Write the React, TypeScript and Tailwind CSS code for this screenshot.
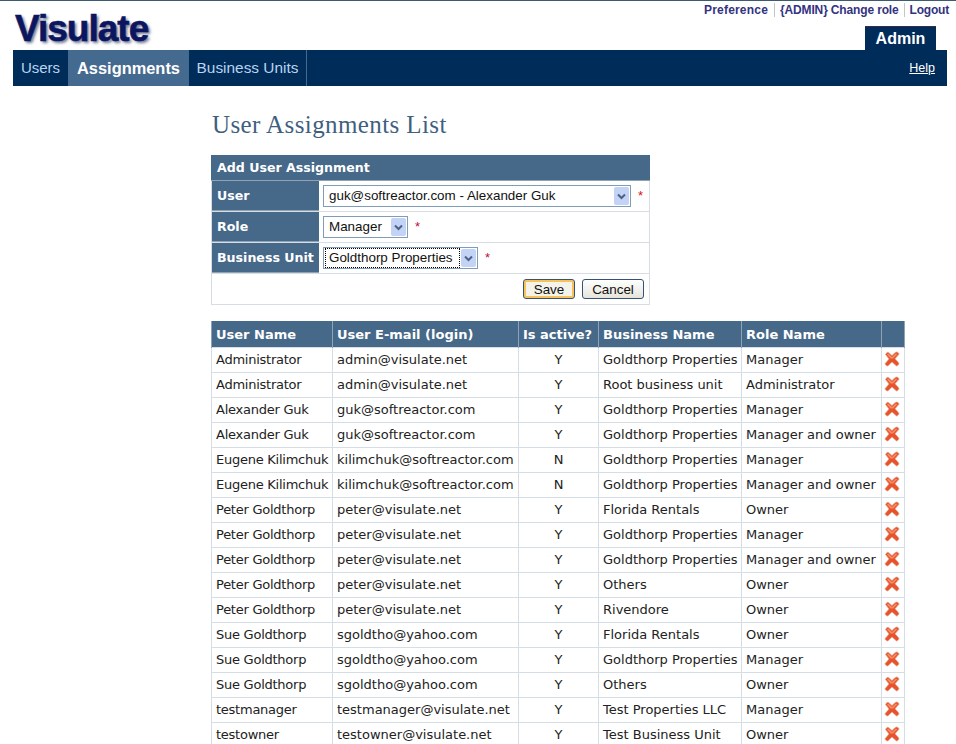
import React from 'react';

const rows = [
  ['Administrator', 'admin@visulate.net', 'Y', 'Goldthorp Properties', 'Manager'],
  ['Administrator', 'admin@visulate.net', 'Y', 'Root business unit', 'Administrator'],
  ['Alexander Guk', 'guk@softreactor.com', 'Y', 'Goldthorp Properties', 'Manager'],
  ['Alexander Guk', 'guk@softreactor.com', 'Y', 'Goldthorp Properties', 'Manager and owner'],
  ['Eugene Kilimchuk', 'kilimchuk@softreactor.com', 'N', 'Goldthorp Properties', 'Manager'],
  ['Eugene Kilimchuk', 'kilimchuk@softreactor.com', 'N', 'Goldthorp Properties', 'Manager and owner'],
  ['Peter Goldthorp', 'peter@visulate.net', 'Y', 'Florida Rentals', 'Owner'],
  ['Peter Goldthorp', 'peter@visulate.net', 'Y', 'Goldthorp Properties', 'Manager'],
  ['Peter Goldthorp', 'peter@visulate.net', 'Y', 'Goldthorp Properties', 'Manager and owner'],
  ['Peter Goldthorp', 'peter@visulate.net', 'Y', 'Others', 'Owner'],
  ['Peter Goldthorp', 'peter@visulate.net', 'Y', 'Rivendore', 'Owner'],
  ['Sue Goldthorp', 'sgoldtho@yahoo.com', 'Y', 'Florida Rentals', 'Owner'],
  ['Sue Goldthorp', 'sgoldtho@yahoo.com', 'Y', 'Goldthorp Properties', 'Manager'],
  ['Sue Goldthorp', 'sgoldtho@yahoo.com', 'Y', 'Others', 'Owner'],
  ['testmanager', 'testmanager@visulate.net', 'Y', 'Test Properties LLC', 'Manager'],
  ['testowner', 'testowner@visulate.net', 'Y', 'Test Business Unit', 'Owner'],
];

const DeleteIcon = () => (
  <svg width="16" height="16" viewBox="0 0 16 16" className="block mx-auto -translate-x-px -translate-y-px">
    <path
      d="M1.5 3.5 C2.5 1.5 3.5 1 4.5 1.5 L8 4.6 C9.5 3 11 1.2 12.5 1 C14 1.2 15 2.2 15 3.2 L11 7.8 C12.5 9.5 14.5 11 15 12.8 C14.5 14 13.5 15 12.5 15 L8 11 L3.8 15 C2.5 15 1.5 14 1 12.7 L5 8 Z"
      fill="#e8532b"
      stroke="#dca791"
      strokeWidth="0.7"
      strokeLinejoin="round"
    />
    <path d="M3 3.4 L4.2 2.4 L8 6 L11.8 2.4 L13.2 3.2 L9 7.4 L6.6 7.4 Z" fill="#f58c66" />
  </svg>
);

const Select = ({ label, width, focused }: { label: string; width: string; focused?: boolean }) => (
  <div className={`${width} h-[22px] border border-[#7f9db9] bg-white flex items-center pl-[2px] pr-[1px]`}>
    <span className={`flex-1 h-[18px] flex items-center pl-[3px] text-[13.4px] text-[#111] font-['Liberation_Sans',sans-serif] whitespace-nowrap ${focused ? 'outline-1 outline-dotted outline-black' : ''}`}>
      {label}
    </span>
    <span className="ml-[2px] w-[15px] h-[18px] bg-[#c3d3f5] rounded-[2px] flex items-center justify-center">
      <svg width="9" height="7" viewBox="0 0 9 7">
        <path d="M1 1.5 L4.5 5 L8 1.5" fill="none" stroke="#4d6185" strokeWidth="2" />
      </svg>
    </span>
  </div>
);

const FormRow = ({ label, children }: { label: string; children: React.ReactNode }) => (
  <div className="flex h-[31px] border-b border-[#d8dde3]">
    <div className="w-[107px] bg-[#466889] border-b border-[#8fa3b7] text-white font-bold text-[12.6px] flex items-center pl-[5px] pt-px whitespace-nowrap">
      {label}
    </div>
    <div className="flex-1 flex items-center pl-[4px]">{children}</div>
  </div>
);

const cols = ['w-[121px]', 'w-[186px]', 'w-[80px]', 'w-[143px]', 'w-[140px]', 'w-[23px]'];

export default function App() {
  return (
    <div className="h-[744px] overflow-hidden bg-white font-['DejaVu_Sans',sans-serif]">
      <div className="h-px bg-[#3c5a70]" />

      {/* header */}
      <div className="h-[49px] relative">
        <div className="absolute left-[15px] top-[6px] text-[37px] leading-[44px] font-bold text-[#0b1660] tracking-[-1px] font-['Liberation_Sans',sans-serif] [-webkit-text-stroke:0.6px_#0b1660] [text-shadow:2px_2px_3px_#6b7390]">
          Visulate
        </div>
        <div className="flex justify-end pr-[7px] pt-[2px] text-[12px] leading-[14px] font-bold text-[#33337f] font-['Liberation_Sans',sans-serif]">
          <span className="pr-[6px] border-r border-[#c5c5c5] tracking-[0.2px]">Preference</span>
          <span className="px-[5px] border-r border-[#c5c5c5] tracking-[-0.15px]">{'{ADMIN}'} Change role</span>
          <span className="pl-[5px] tracking-[-0.2px]">Logout</span>
        </div>
        <div className="absolute left-[865px] top-[25px] w-[71px] h-[24px] pt-px bg-[#002c5a] border-t border-[#3a2a50] text-white font-bold text-[16px] flex items-center justify-center font-['Liberation_Sans',sans-serif]">
          Admin
        </div>
      </div>

      {/* nav */}
      <div className="ml-[13px] w-[934px] h-[36px] bg-[#002c5a] flex items-center justify-between text-[#b9d4f0]">
        <div className="flex h-full font-['Liberation_Sans',sans-serif]">
          <div className="w-[55px] flex items-center justify-center text-[15px]">Users</div>
          <div className="w-[121px] flex items-center justify-center bg-[#456a8f] text-white font-bold text-[16.4px]">Assignments</div>
          <div className="w-[118px] flex items-center justify-center border-r border-[#456a8f] text-[15.4px]">Business Units</div>
        </div>
        <a className="pr-[12px] text-white text-[12.5px] underline font-['Liberation_Sans',sans-serif]">Help</a>
      </div>

      {/* content */}
      <div className="pl-[211px]">
        <h1 className="mt-[24px] h-[30px] pl-px text-[25px] leading-[30px] text-[#3f5f80] font-normal font-['Liberation_Serif',serif] tracking-[0.4px]">
          User Assignments List
        </h1>

        <div className="mt-[15px] w-[439px] border-r border-l border-b border-[#d8dde3]">
          <div className="-mx-px h-[26px] bg-[#466889] border-b border-[#8fa3b7] text-white font-bold text-[12.6px] flex items-center pl-[6px] pt-px">
            Add User Assignment
          </div>
          <FormRow label="User">
            <Select label="guk@softreactor.com - Alexander Guk" width="w-[308px]" />
            <span className="ml-[7px] text-[#e01010] text-[13px] font-['Liberation_Sans',sans-serif]">*</span>
          </FormRow>
          <FormRow label="Role">
            <Select label="Manager" width="w-[85px]" />
            <span className="ml-[7px] text-[#c01030] text-[13px] font-['Liberation_Sans',sans-serif]">*</span>
          </FormRow>
          <FormRow label="Business Unit">
            <Select label="Goldthorp Properties" width="w-[155px]" focused />
            <span className="ml-[7px] text-[#c01030] text-[13px] font-['Liberation_Sans',sans-serif]">*</span>
          </FormRow>
          <div className="h-[30px] flex items-center justify-end pr-[5px] gap-[7px] font-['Liberation_Sans',sans-serif] text-[13.4px] text-[#111]">
            <button className="w-[52px] h-[20px] rounded-[3px] border border-[#35537a] bg-[#f4f3ea] shadow-[inset_0_0_0_2px_#f5c35a]">Save</button>
            <button className="w-[62px] h-[20px] rounded-[3px] border border-[#35537a] bg-gradient-to-b from-white to-[#e6e4da]">Cancel</button>
          </div>
        </div>

        <table className="mt-[16px] w-[692px] table-fixed border-collapse text-[13px] text-[#222]">
          <colgroup>
            {cols.map((c, i) => <col key={i} className={c} />)}
          </colgroup>
          <thead>
            <tr className="h-[26px] bg-[#466889] text-white text-left">
              {['User Name', 'User E-mail (login)', 'Is active?', 'Business Name', 'Role Name', ''].map((h, i) => (
                <th key={i} className="pl-[4px] pt-px font-bold border-x border-[#8fa3b7] whitespace-nowrap">{h}</th>
              ))}
            </tr>
          </thead>
          <tbody>
            {rows.map((r, i) => (
              <tr key={i} className="h-[25px]">
                {r.map((v, j) => (
                  <td key={j} className={`border border-[#d5dde6] whitespace-nowrap ${j === 2 ? 'text-center' : 'pl-[4px]'} ${j === 0 ? 'tracking-[-0.25px]' : ''}`}>{v}</td>
                ))}
                <td className="border border-[#d5dde6]"><DeleteIcon /></td>
              </tr>
            ))}
          </tbody>
        </table>
      </div>
    </div>
  );
}
